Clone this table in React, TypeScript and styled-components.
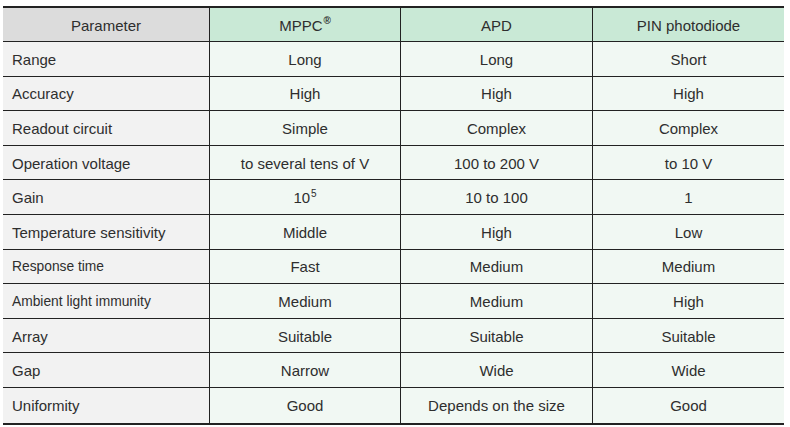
import styled, { createGlobalStyle } from "styled-components";

const GlobalStyle = createGlobalStyle`
  html, body {
    margin: 0;
    padding: 0;
    background: #ffffff;
  }
  body {
    font-family: "Liberation Sans", Arial, sans-serif;
    color: #2e2e2e;
  }
`;

const Page = styled.div`
  padding: 6px 6px 0 3px;
`;

const Table = styled.div`
  width: 781px;
  display: grid;
  grid-template-columns: 206px 191px 192px 192px;
  border-top: 2px solid #222222;
  border-bottom: 2px solid #222222;
`;

const Cell = styled.div<{ $head?: boolean; $param?: boolean; $small?: boolean; $last?: boolean }>`
  box-sizing: border-box;
  height: ${(p) => (p.$head ? "34px" : "34.6px")};
  display: flex;
  align-items: center;
  padding-top: 1px;
  justify-content: ${(p) => (p.$param && !p.$head ? "flex-start" : "center")};
  padding-left: ${(p) => (p.$param && !p.$head ? "9px" : "0")};
  font-size: ${(p) => (p.$small ? "13.8px" : "15px")};
  background: ${(p) =>
    p.$head
      ? p.$param
        ? "#dcdcdc"
        : "#c9e9d6"
      : p.$param
      ? "#f2f2f2"
      : "#f1f8f3"};
  border-bottom: ${(p) => (p.$last ? "none" : "1px solid #222222")};
  border-left: ${(p) => (p.$param ? "none" : "1px solid #222222")};
`;

const Sup = styled.span<{ $bold?: boolean }>`
  font-size: 10px;
  font-weight: ${(p) => (p.$bold ? 700 : 400)};
  align-self: flex-start;
  margin-top: ${(p) => (p.$bold ? "6px" : "7px")};
  margin-left: 1px;
`;

type Row = { param: string; small?: boolean; values: React.ReactNode[] };

const rows: Row[] = [
  { param: "Range", values: ["Long", "Long", "Short"] },
  { param: "Accuracy", values: ["High", "High", "High"] },
  { param: "Readout circuit", values: ["Simple", "Complex", "Complex"] },
  { param: "Operation voltage", values: ["to several tens of V", "100 to 200 V", "to 10 V"] },
  {
    param: "Gain",
    values: [
      <>
        10<Sup>5</Sup>
      </>,
      "10 to 100",
      "1",
    ],
  },
  { param: "Temperature sensitivity", values: ["Middle", "High", "Low"] },
  { param: "Response time", small: true, values: ["Fast", "Medium", "Medium"] },
  { param: "Ambient light immunity", small: true, values: ["Medium", "Medium", "High"] },
  { param: "Array", values: ["Suitable", "Suitable", "Suitable"] },
  { param: "Gap", values: ["Narrow", "Wide", "Wide"] },
  { param: "Uniformity", values: ["Good", "Depends on the size", "Good"] },
];

export default function App() {
  return (
    <Page>
      <GlobalStyle />
      <Table>
        <Cell $head $param>Parameter</Cell>
        <Cell $head>
          MPPC<Sup $bold>®</Sup>
        </Cell>
        <Cell $head>APD</Cell>
        <Cell $head>PIN photodiode</Cell>
        {rows.map((r, i) => {
          const last = i === rows.length - 1;
          return [
            <Cell key={r.param} $param $small={r.small} $last={last}>
              {r.param}
            </Cell>,
            ...r.values.map((v, j) => (
              <Cell key={r.param + j} $last={last}>
                {v}
              </Cell>
            )),
          ];
        })}
      </Table>
    </Page>
  );
}
